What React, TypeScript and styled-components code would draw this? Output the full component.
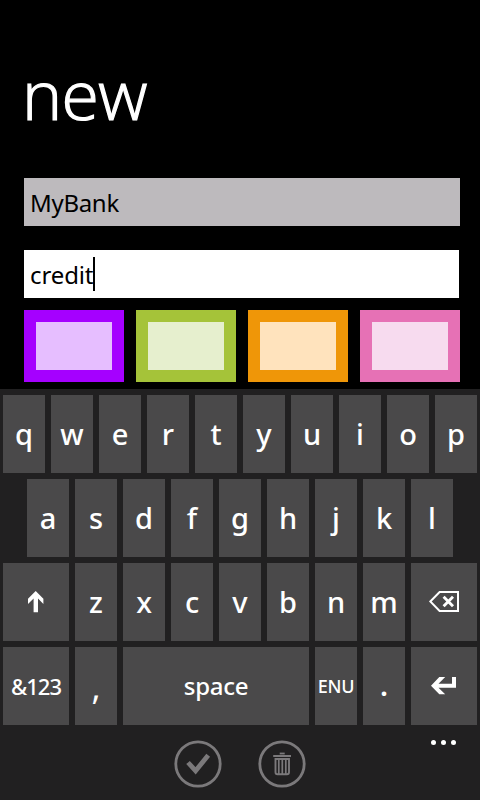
import React from 'react';
import styled, { createGlobalStyle } from 'styled-components';

const GlobalStyle = createGlobalStyle`
  * { box-sizing: border-box; }
  body { margin: 0; background: #000; }
`;

const Screen = styled.main`
  width: 480px;
  height: 800px;
  display: flex;
  flex-direction: column;
  overflow: hidden;
  background: #000;
  color: #fff;
  font-family: 'Noto Sans', 'Open Sans', sans-serif;
`;

const Form = styled.section`
  height: 389px;
  flex: none;
  padding: 46px 20px 0 24px;
`;

const Title = styled.h1`
  margin: 0 0 36px -2px;
  height: 96px;
  line-height: 96px;
  font-family: 'Open Sans', sans-serif;
  font-size: 68px;
  font-weight: 300;
  letter-spacing: -0.6px;
  -webkit-text-stroke: 1.2px #fff;
`;

const Field = styled.div<{ $active?: boolean }>`
  display: flex;
  align-items: center;
  height: 48px;
  width: ${(p) => (p.$active ? 435 : 436)}px;
  margin-bottom: ${(p) => (p.$active ? 12 : 24)}px;
  padding-left: 6px;
  background: ${(p) => (p.$active ? '#fff' : '#bdbabd')};
  color: #000;
  font-size: 24px;
  line-height: 48px;
`;

const FieldText = styled.span<{ $spacing: number }>`
  letter-spacing: ${(p) => p.$spacing}px;
  padding-top: 1px;
`;

const Caret = styled.span`
  width: 2px;
  height: 34px;
  background: #000;
`;

const Swatches = styled.div`
  display: flex;
  gap: 12px;
`;

const Swatch = styled.div<{ $border: string; $fill: string }>`
  width: 100px;
  height: 72px;
  border: 12px solid ${(p) => p.$border};
  background: ${(p) => p.$fill};
`;

const Keyboard = styled.section`
  display: flex;
  flex-direction: column;
  gap: 6px;
  padding: 6px 3px 0;
  background: #212021;
`;

const KeyRow = styled.div`
  display: flex;
  justify-content: center;
  gap: 6px;
`;

const Key = styled.div<{ $width?: number }>`
  display: flex;
  align-items: center;
  justify-content: center;
  width: ${(p) => p.$width ?? 42}px;
  height: 78px;
  background: #4a494a;
`;

const KeyLabel = styled.span<{ $size?: number; $weight?: number; $drop?: number; $spacing?: number }>`
  font-size: ${(p) => p.$size ?? 29}px;
  font-weight: ${(p) => p.$weight ?? 500};
  letter-spacing: ${(p) => p.$spacing ?? 0}px;
  line-height: 40px;
  white-space: nowrap;
  transform: translateY(${(p) => p.$drop ?? 0}px);
`;

const AppBar = styled.footer`
  flex: 1;
  display: grid;
  grid-template-columns: 174px 48px 36px 48px 1fr;
  padding-top: 15px;
  background: #212021;
`;

const RoundButton = styled.div<{ $column: number }>`
  grid-column: ${(p) => p.$column};
  grid-row: 1;
  width: 48px;
  height: 48px;
`;

const More = styled.div`
  grid-column: 5;
  grid-row: 1;
  display: flex;
  gap: 5px;
  justify-self: end;
  margin-right: 24px;
`;

const Dot = styled.span`
  width: 5px;
  height: 5px;
  border-radius: 50%;
  background: #fff;
`;

const ShiftIcon = () => (
  <svg width="16" height="22" viewBox="0 0 16 22" fill="#fff">
    <path d="M7.7 0L15.4 7.8V13L10 7.6V21.2H5.6V7.6L0 13V7.8Z" />
  </svg>
);

const BackspaceIcon = () => (
  <svg width="30" height="22" viewBox="0 0 30 22" fill="none" stroke="#fff">
    <path d="M1.3 10.5L10.6 1H29V20H10.6Z" strokeWidth="2" />
    <path d="M14.6 5.8L24 15.2M24 5.8L14.6 15.2" strokeWidth="2.9" />
  </svg>
);

const EnterIcon = () => (
  <svg width="26" height="18" viewBox="0 0 26 18" fill="#fff">
    <path d="M0 8.7L8.3 0H14.2L7.5 6.8H21V0H25V10.8H7.5L14.2 17.3H8.3Z" />
  </svg>
);

const CheckIcon = () => (
  <svg width="48" height="48" viewBox="0 0 48 48" fill="none" stroke="#7b797b">
    <circle cx="24" cy="24" r="22.2" strokeWidth="2.8" />
    <path d="M14 22.5L21.6 30.8L34.2 15.3" strokeWidth="4.8" />
  </svg>
);

const TrashIcon = () => (
  <svg width="48" height="48" viewBox="0 0 48 48" fill="none" stroke="#7b797b">
    <circle cx="24" cy="24" r="22.2" strokeWidth="2.8" />
    <path d="M15.2 16H33" strokeWidth="2" />
    <path d="M21.7 13.5H26.7" strokeWidth="1.8" />
    <path d="M17.5 19V32.2Q17.5 34.2 19.5 34.2H29Q31 34.2 31 32.2V19Z" strokeWidth="1.9" />
    <path d="M20.8 19V34M24.3 19V34M27.8 19V34" strokeWidth="1.7" />
  </svg>
);

const colors = [
  { border: '#a500ff', fill: '#e6beff' },
  { border: '#a5c339', fill: '#e6efce' },
  { border: '#ef9608', fill: '#ffe3bd' },
  { border: '#e671b5', fill: '#f7dbef' },
];

const Letters = ({ keys }: { keys: string }) => (
  <>
    {keys.split('').map((k) => (
      <Key key={k}>
        <KeyLabel>{k}</KeyLabel>
      </Key>
    ))}
  </>
);

export default function App() {
  return (
    <Screen>
      <GlobalStyle />
      <Form>
        <Title>new</Title>
        <Field>
          <FieldText $spacing={-0.3}>MyBank</FieldText>
        </Field>
        <Field $active>
          <FieldText $spacing={-0.12}>credit</FieldText>
          <Caret />
        </Field>
        <Swatches>
          {colors.map((c) => (
            <Swatch key={c.border} $border={c.border} $fill={c.fill} />
          ))}
        </Swatches>
      </Form>
      <Keyboard>
        <KeyRow>
          <Letters keys="qwertyuiop" />
        </KeyRow>
        <KeyRow>
          <Letters keys="asdfghjkl" />
        </KeyRow>
        <KeyRow>
          <Key $width={66}>
            <ShiftIcon />
          </Key>
          <Letters keys="zxcvbnm" />
          <Key $width={66}>
            <BackspaceIcon />
          </Key>
        </KeyRow>
        <KeyRow>
          <Key $width={66}>
            <KeyLabel $size={22} $spacing={-1}>&amp;123</KeyLabel>
          </Key>
          <Key>
            <KeyLabel $size={34} $drop={1} $weight={400}>,</KeyLabel>
          </Key>
          <Key $width={186}>
            <KeyLabel $size={24} $spacing={-0.3}>space</KeyLabel>
          </Key>
          <Key>
            <KeyLabel $size={18} $spacing={-0.3}>ENU</KeyLabel>
          </Key>
          <Key>
            <KeyLabel $weight={600} $drop={-1}>.</KeyLabel>
          </Key>
          <Key $width={66}>
            <EnterIcon />
          </Key>
        </KeyRow>
      </Keyboard>
      <AppBar>
        <RoundButton $column={2}>
          <CheckIcon />
        </RoundButton>
        <RoundButton $column={4}>
          <TrashIcon />
        </RoundButton>
        <More>
          <Dot />
          <Dot />
          <Dot />
        </More>
      </AppBar>
    </Screen>
  );
}
